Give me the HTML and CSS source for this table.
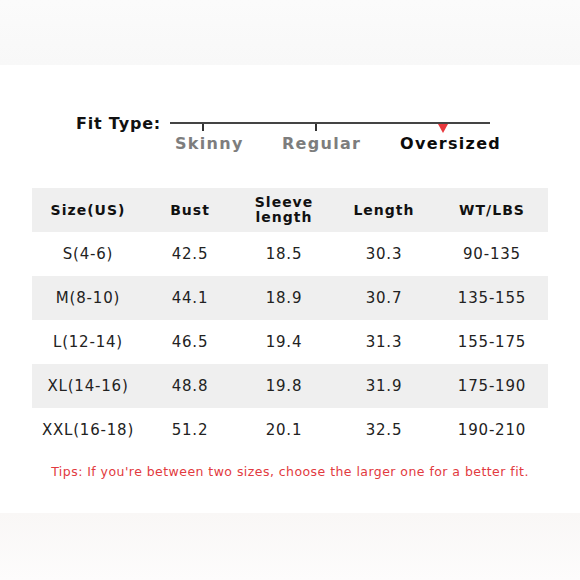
FILE: index.html
```html
<!DOCTYPE html>
<html>
<head>
<meta charset="utf-8">
<link rel="stylesheet" href="styles.css">
</head>
<body>
<div class="band top"></div>
<main class="content">
  <section class="fit">
    <div class="fit-label">Fit Type:</div>
    <div class="scale">
      <div class="opt opt-1"><span class="tick"></span><span class="name muted">Skinny</span></div>
      <div class="opt opt-2"><span class="tick"></span><span class="name muted">Regular</span></div>
      <div class="opt opt-3"><span class="arrow"></span><span class="name active">Oversized</span></div>
    </div>
  </section>
  <table class="sizes">
    <thead>
      <tr><th>Size(US)</th><th>Bust</th><th>Sleeve<br>length</th><th>Length</th><th>WT/LBS</th></tr>
    </thead>
    <tbody>
      <tr><td>S(4-6)</td><td>42.5</td><td>18.5</td><td>30.3</td><td>90-135</td></tr>
      <tr class="alt"><td>M(8-10)</td><td>44.1</td><td>18.9</td><td>30.7</td><td>135-155</td></tr>
      <tr><td>L(12-14)</td><td>46.5</td><td>19.4</td><td>31.3</td><td>155-175</td></tr>
      <tr class="alt"><td>XL(14-16)</td><td>48.8</td><td>19.8</td><td>31.9</td><td>175-190</td></tr>
      <tr><td>XXL(16-18)</td><td>51.2</td><td>20.1</td><td>32.5</td><td>190-210</td></tr>
    </tbody>
  </table>
  <p class="tips">Tips: If you're between two sizes, choose the larger one for a better fit.</p>
</main>
<div class="band bottom"></div>
</body>
</html>
```

FILE: styles.css
```css
html, body {
  margin: 0;
  padding: 0;
  background: #ffffff;
  font-family: "DejaVu Sans", "Liberation Sans", sans-serif;
  color: #1a1a1a;
}
body {
  width: 580px;
  height: 580px;
  overflow: hidden;
  display: flex;
  flex-direction: column;
}
.band {
  flex: none;
}
.band.top {
  height: 65px;
  background: linear-gradient(#fbfbfb, #f8f8f8);
}
.band.bottom {
  height: 67px;
  margin-top: auto;
  background: linear-gradient(#f9f7f6, #fdfcfc);
}
.content {
  height: 448px;
  display: flex;
  flex-direction: column;
}
.fit {
  display: flex;
  align-items: flex-start;
  margin-top: 50px;
  padding-left: 76px;
  height: 73px;
}
.fit-label {
  font-size: 16px;
  font-weight: 600;
  letter-spacing: 0.8px;
  line-height: 18px;
  width: 94px;
  color: #111;
}
.scale {
  margin-top: 7px;
  width: 320px;
  border-top: 2px solid #444;
  display: flex;
  height: 30px;
}
.opt {
  flex: none;
  display: flex;
  flex-direction: column;
  align-items: flex-start;
}
.opt-1 { width: 107px; padding-left: 5px; }
.opt-2 { width: 118px; }
.opt-3 { width: 110px; }
.tick {
  display: block;
  width: 2px;
  height: 7px;
  background: #333;
}
.opt-1 .tick { margin-left: 27px; }
.opt-2 .tick { margin-left: 33px; }
.arrow {
  display: block;
  width: 0;
  height: 0;
  border-left: 5px solid transparent;
  border-right: 5px solid transparent;
  border-top: 9px solid #e8383d;
  margin-left: 38px;
  margin-bottom: -2px;
}
.name {
  font-size: 16px;
  font-weight: 700;
  letter-spacing: 1.3px;
  margin-top: 4px;
  line-height: 18px;
}
.muted { color: #7d7d7d; }
.active { color: #0c0c0c; }
.sizes {
  margin-left: 32px;
  width: 516px;
  border-collapse: collapse;
  table-layout: fixed;
}
.sizes th, .sizes td {
  height: 44px;
  padding: 0;
  text-align: center;
  vertical-align: middle;
}
.sizes th:nth-child(1), .sizes td:nth-child(1) { width: 112px; }
.sizes th:nth-child(2), .sizes td:nth-child(2) { width: 92px; }
.sizes th:nth-child(3), .sizes td:nth-child(3) { width: 96px; }
.sizes th:nth-child(4), .sizes td:nth-child(4) { width: 104px; }
.sizes th:nth-child(5), .sizes td:nth-child(5) { width: 112px; }
.sizes thead tr {
  background: #efefef;
}
.sizes th {
  font-size: 14px;
  font-weight: 700;
  line-height: 15px;
  color: #111;
  letter-spacing: 1px;
}
.sizes td {
  font-size: 15px;
  letter-spacing: 0.8px;
  color: #222;
}
.sizes tr.alt {
  background: #efefef;
}
.tips {
  margin: 12px 0 0;
  text-align: center;
  font-size: 12.5px;
  color: #e23a40;
  letter-spacing: 0.45px;
  line-height: 16px;
}
```
